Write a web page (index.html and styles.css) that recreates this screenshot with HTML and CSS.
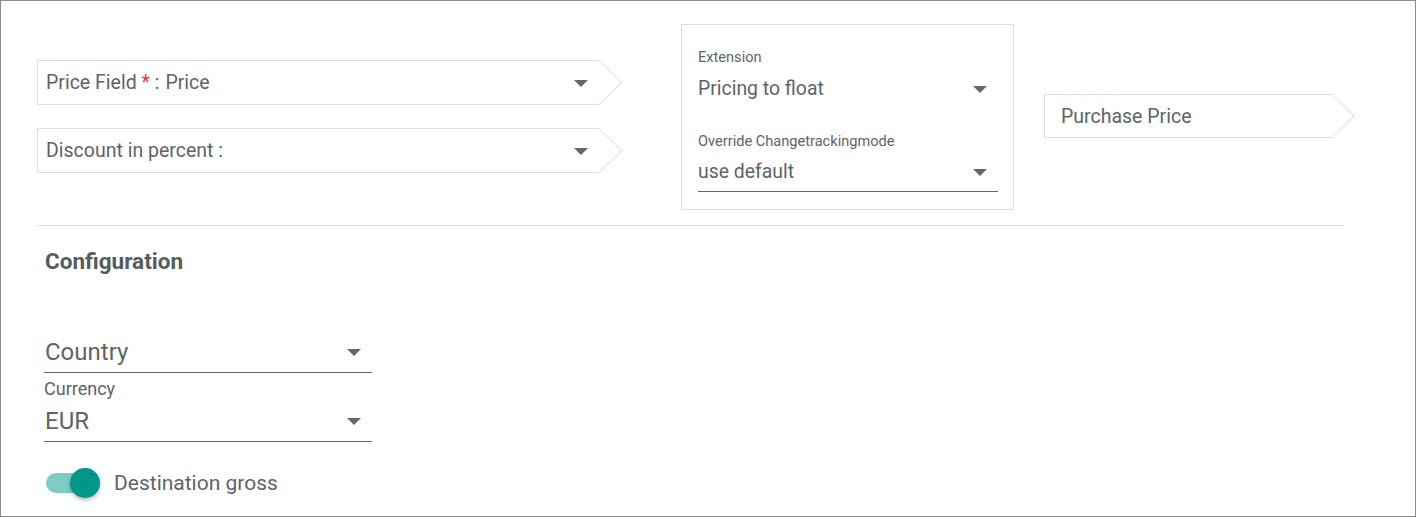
FILE: index.html
```html
<!DOCTYPE html>
<html>
<head>
<meta charset="utf-8">
<link rel="stylesheet" href="styles.css">
</head>
<body>
<div class="frame">
  <div class="top-row">
    <div class="left-col">
      <div class="chev">
        <div class="chev-body">
          <span class="chev-text">Price Field <span class="req">*</span> :<span class="val">Price</span></span>
          <span class="tri"></span>
        </div>
        <svg class="chev-tip" width="24" height="45" viewBox="0 0 24 45"><polyline points="0,0.5 23,22.5 0,44.5" fill="none" stroke="#d6d6d6" stroke-width="1"/></svg>
      </div>
      <div class="chev">
        <div class="chev-body">
          <span class="chev-text">Discount in percent :</span>
          <span class="tri"></span>
        </div>
        <svg class="chev-tip" width="24" height="45" viewBox="0 0 24 45"><polyline points="0,0.5 23,22.5 0,44.5" fill="none" stroke="#d6d6d6" stroke-width="1"/></svg>
      </div>
    </div>
    <div class="card">
      <div class="small-label">Extension</div>
      <div class="card-select">
        <span>Pricing to float</span>
        <span class="tri"></span>
      </div>
      <div class="small-label override">Override Changetrackingmode</div>
      <div class="card-select underlined">
        <span>use default</span>
        <span class="tri"></span>
      </div>
    </div>
    <div class="chev purchase">
      <div class="chev-body">
        <span class="chev-text">Purchase Price</span>
      </div>
      <svg class="chev-tip" width="23" height="44" viewBox="0 0 23 44"><polyline points="0,0.5 22,22 0,43.5" fill="none" stroke="#d6d6d6" stroke-width="1"/></svg>
    </div>
  </div>
  <div class="divider"></div>
  <div class="config">
    <div class="config-title">Configuration</div>
    <div class="mselect country">
      <span>Country</span>
      <span class="tri"></span>
    </div>
    <div class="mlabel">Currency</div>
    <div class="mselect eur">
      <span>EUR</span>
      <span class="tri"></span>
    </div>
    <div class="toggle-row">
      <div class="toggle">
        <div class="track"></div>
        <div class="thumb"></div>
      </div>
      <span class="toggle-label">Destination gross</span>
    </div>
  </div>
</div>
</body>
</html>
```

FILE: styles.css
```css
* { box-sizing: border-box; }
html, body { margin: 0; padding: 0; background: #fff; }
body { font-family: Roboto, "Noto Sans", sans-serif; color: #5d6467; }

.frame {
  width: 1416px;
  height: 517px;
  border: 1px solid #8c8c8c;
  padding: 23px 0 0 36px;
  overflow: hidden;
}

.top-row { display: flex; align-items: flex-start; }

.left-col {
  width: 586px;
  margin-top: 36px;
  display: flex;
  flex-direction: column;
  gap: 23px;
}

.chev { display: flex; align-items: stretch; height: 45px; }
.chev-body {
  flex: 1;
  border: 1px solid #dcdcdc;
  border-right: none;
  display: flex;
  align-items: center;
  justify-content: space-between;
  padding: 1px 11px 0 8px;
}
.chev-tip { flex: none; display: block; }
.chev-text { font-size: 19.5px; line-height: 22px; }
.req { color: #e53935; }
.val { margin-left: 6px; }

.tri {
  width: 0; height: 0;
  border-left: 7px solid transparent;
  border-right: 7px solid transparent;
  border-top: 7px solid #5f6a6a;
  flex: none;
}

.card {
  margin-left: 58px;
  width: 333px;
  height: 186px;
  border: 1px solid #dcdcdc;
  padding: 24px 15px 0 16px;
}
.small-label { font-size: 14.6px; line-height: 16px; }
.small-label.override { margin-top: 32px; }
.card-select {
  margin-top: 12px;
  display: flex;
  align-items: center;
  justify-content: space-between;
  font-size: 19.4px;
  line-height: 24px;
  padding-right: 11px;
}
.small-label.override + .card-select { margin-top: 11px; }
.card-select.underlined {
  padding-bottom: 7px;
  border-bottom: 1px solid #5f6769;
}

.purchase {
  margin-left: 30px;
  margin-top: 70px;
  width: 311px;
  height: 44px;
}
.purchase .chev-body { padding-left: 16px; }

.divider {
  margin-top: 15px;
  width: 1307px;
  height: 1px;
  background: #dedede;
}

.config { padding-left: 7px; display: flex; flex-direction: column; align-items: flex-start; }
.config-title {
  margin-top: 23px;
  margin-left: 1px;
  font-size: 22.5px;
  line-height: 24px;
  font-weight: 700;
  color: #555c5f;
}
.mselect {
  width: 328px;
  display: flex;
  align-items: center;
  justify-content: space-between;
  font-size: 24px;
  line-height: 26px;
  padding: 0 11px 7px 1px;
  border-bottom: 1px solid #5f6769;
}
.mselect.country { margin-top: 66px; }
.mlabel { margin-top: 7px; font-size: 18px; line-height: 18px; }
.mselect.eur { margin-top: 10px; }

.toggle-row { margin-top: 24px; display: flex; align-items: center; height: 34px; }
.toggle { position: relative; width: 56px; height: 34px; }
.track {
  position: absolute;
  left: 2px; top: 7px;
  width: 44px; height: 20px;
  border-radius: 10px;
  background: #80cbc4;
}
.thumb {
  position: absolute;
  left: 26px; top: 2px;
  width: 30px; height: 30px;
  border-radius: 50%;
  background: #009688;
  box-shadow: 0 2px 4px rgba(0,0,0,0.3);
}
.toggle-label { margin-left: 14px; font-size: 21px; line-height: 24px; }
```
